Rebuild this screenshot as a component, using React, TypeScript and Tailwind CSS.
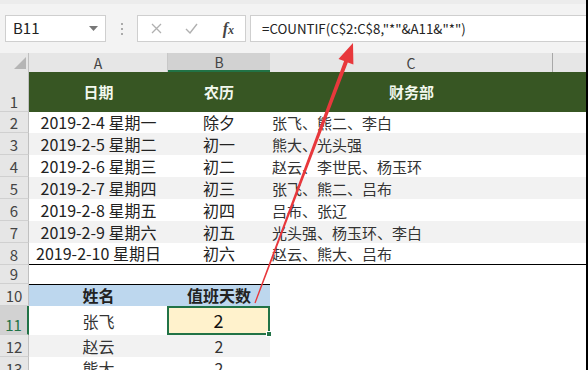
import React from 'react'

const font = { fontFamily: '"Noto Sans CJK SC", "Noto Sans", sans-serif' }

const rows = [
  { n: 2, h: 'h-[21px]', a: '2019-2-4 星期一', b: '除夕', c: '张飞、熊二、李白', gray: false },
  { n: 3, h: 'h-[22px]', a: '2019-2-5 星期二', b: '初一', c: '熊大、光头强', gray: true },
  { n: 4, h: 'h-[22px]', a: '2019-2-6 星期三', b: '初二', c: '赵云、李世民、杨玉环', gray: false },
  { n: 5, h: 'h-[22px]', a: '2019-2-7 星期四', b: '初三', c: '张飞、熊二、吕布', gray: true },
  { n: 6, h: 'h-[22px]', a: '2019-2-8 星期五', b: '初四', c: '吕布、张辽', gray: false },
  { n: 7, h: 'h-[22px]', a: '2019-2-9 星期六', b: '初五', c: '光头强、杨玉环、李白', gray: true },
  { n: 8, h: 'h-[22px]', a: '2019-2-10 星期日', b: '初六', c: '赵云、熊大、吕布', gray: false },
]

const RowHead = ({ n, active }: { n: number; active?: boolean }) => (
  <div
    className={`w-[29px] shrink-0 flex items-end justify-center pb-[2px] text-[15px] leading-none border-b border-[#d0d0d0] ${
      active ? 'bg-[#d2d2d2] border-r-2 border-r-[#217346] text-[#217346]' : 'bg-[#e6e6e6] border-r border-r-[#c0c0c0] text-[#444]'
    }`}
  >
    {n}
  </div>
)

export default function App() {
  return (
    <div className="w-[588px] h-[370px] overflow-hidden flex bg-white relative" style={font}>
      <div className="w-[586px] flex flex-col">
        {/* TOOLBAR */}
        <div className="h-[53px] shrink-0 bg-[#f3f3f3] border-t-[4px] border-t-[#ececec] flex items-start pt-[11px] pl-[5px]">
          <div className="w-[101px] h-[27px] bg-white border border-[#cfcfcf] flex items-center px-[7px] text-[15px] text-[#222]">
            <span>B11</span>
            <svg className="ml-auto" width="9" height="5" viewBox="0 0 9 5"><path d="M0 0h9L4.5 5z" fill="#777" /></svg>
          </div>
          <div className="w-[31px] h-[27px] flex flex-col items-center justify-center gap-[3px]">
            <span className="w-[2px] h-[2px] bg-[#aaa]" />
            <span className="w-[2px] h-[2px] bg-[#aaa]" />
            <span className="w-[2px] h-[2px] bg-[#aaa]" />
          </div>
          <div className="w-[109px] h-[27px] bg-white border border-[#cfcfcf] flex items-center">
            <svg className="ml-[13px]" width="11" height="11" viewBox="0 0 11 11"><path d="M1 1l9 9M10 1l-9 9" stroke="#b0b0b0" strokeWidth="1.3" /></svg>
            <svg className="ml-[23px]" width="13" height="11" viewBox="0 0 13 11"><path d="M1 6l4 4 7-9" stroke="#b0b0b0" strokeWidth="1.4" fill="none" /></svg>
            <span className="ml-auto mr-[11px] text-[16px] italic font-bold text-[#444]" style={{ fontFamily: '"Liberation Serif", serif' }}>
              f<span className="text-[12px]">x</span>
            </span>
          </div>
          <div className="ml-[4px] flex-1 h-[27px] bg-white border border-[#cfcfcf] border-r-0 flex items-center pl-[11px] text-[13.3px] text-[#222]">
            =COUNTIF(C$2:C$8,"*"&amp;A11&amp;"*")
          </div>
        </div>

        {/* COLUMN HEADERS */}
        <div className="h-[19px] shrink-0 flex bg-[#e6e6e6] text-[14px] text-[#444] leading-none">
          <div className="w-[29px] border-r border-[#c0c0c0] flex items-end justify-end pr-[2px] pb-[3px]">
            <svg width="12" height="12" viewBox="0 0 12 12"><path d="M12 0V12H0z" fill="#b5b5b5" /></svg>
          </div>
          <div className="w-[139px] border-r border-[#c8c8c8] flex items-center justify-center">A</div>
          <div className="w-[102px] bg-[#d2d2d2] border-b-2 border-[#217346] flex items-center justify-center">B</div>
          <div className="w-[283px] border-r border-[#a8a8a8] flex items-center justify-center">C</div>
          <div className="flex-1" />
        </div>

        {/* ROW 1 */}
        <div className="h-[40px] shrink-0 flex">
          <RowHead n={1} />
          <div className="flex-1 flex bg-[#375623] text-[#f2f8ee] font-bold text-[15px] items-center">
            <div className="w-[139px] text-center">日期</div>
            <div className="w-[102px] text-center">农历</div>
            <div className="w-[283px] text-center">财务部</div>
          </div>
        </div>

        {/* ROWS 2-8 */}
        {rows.map((r, i) => (
          <div key={r.n} className={`${r.h} shrink-0 flex`}>
            <RowHead n={r.n} />
            <div
              className={`flex-1 flex items-center text-[16px] leading-[19px] text-[#222] ${r.gray ? 'bg-[#f2f2f2]' : 'bg-white'} ${
                i === rows.length - 1 ? 'border-b border-black' : ''
              }`}
            >
              <div className="w-[139px] text-center whitespace-nowrap">{r.a}</div>
              <div className="w-[102px] text-center">{r.b}</div>
              <div className="w-[283px] pl-[2px] text-[15px] text-[#333]">{r.c}</div>
            </div>
          </div>
        ))}

        {/* ROW 9 */}
        <div className="h-[19px] shrink-0 flex">
          <RowHead n={9} />
          <div className="flex-1" />
        </div>

        {/* ROW 10 */}
        <div className="h-[22px] shrink-0 flex">
          <RowHead n={10} />
          <div className="w-[241px] flex items-center bg-[#bdd7ee] border-t border-black font-bold text-[16px] leading-[19px] text-[#222]">
            <div className="w-[139px] text-center">姓名</div>
            <div className="w-[102px] text-center">值班天数</div>
          </div>
        </div>

        {/* ROW 11 */}
        <div className="h-[29px] shrink-0 flex">
          <RowHead n={11} active />
          <div className="w-[139px] flex items-center justify-center text-[16px] text-[#333]">张飞</div>
          <div className="w-[103px] -ml-[1px] relative bg-[#fff2cc] border-2 border-[#217346] flex items-center justify-center text-[18px] text-[#111]">
            2
            <span className="absolute -right-[4px] -bottom-[4px] w-[6px] h-[6px] bg-[#217346] border border-white" />
          </div>
        </div>

        {/* ROW 12 */}
        <div className="h-[22px] shrink-0 flex">
          <RowHead n={12} />
          <div className="w-[241px] flex items-center bg-[#f2f2f2] text-[16px] leading-[19px] text-[#333]">
            <div className="w-[139px] text-center">赵云</div>
            <div className="w-[102px] text-center">2</div>
          </div>
        </div>

        {/* ROW 13 */}
        <div className="h-[22px] shrink-0 flex">
          <RowHead n={13} />
          <div className="w-[241px] flex items-center bg-white text-[16px] leading-[19px] text-[#333]">
            <div className="w-[139px] text-center">熊大</div>
            <div className="w-[102px] text-center">2</div>
          </div>
        </div>
      </div>
      <div className="w-[2px] bg-black" />

      {/* RED ARROW */}
      <svg className="absolute left-0 top-0 pointer-events-none" width="588" height="370" viewBox="0 0 588 370">
        <polygon
          points="353,43 353.4,64.5 347.8,62.4 255.6,303.2 254.4,302.8 344.1,61 338.5,58.9"
          fill="#e8383c"
        />
      </svg>
    </div>
  )
}
